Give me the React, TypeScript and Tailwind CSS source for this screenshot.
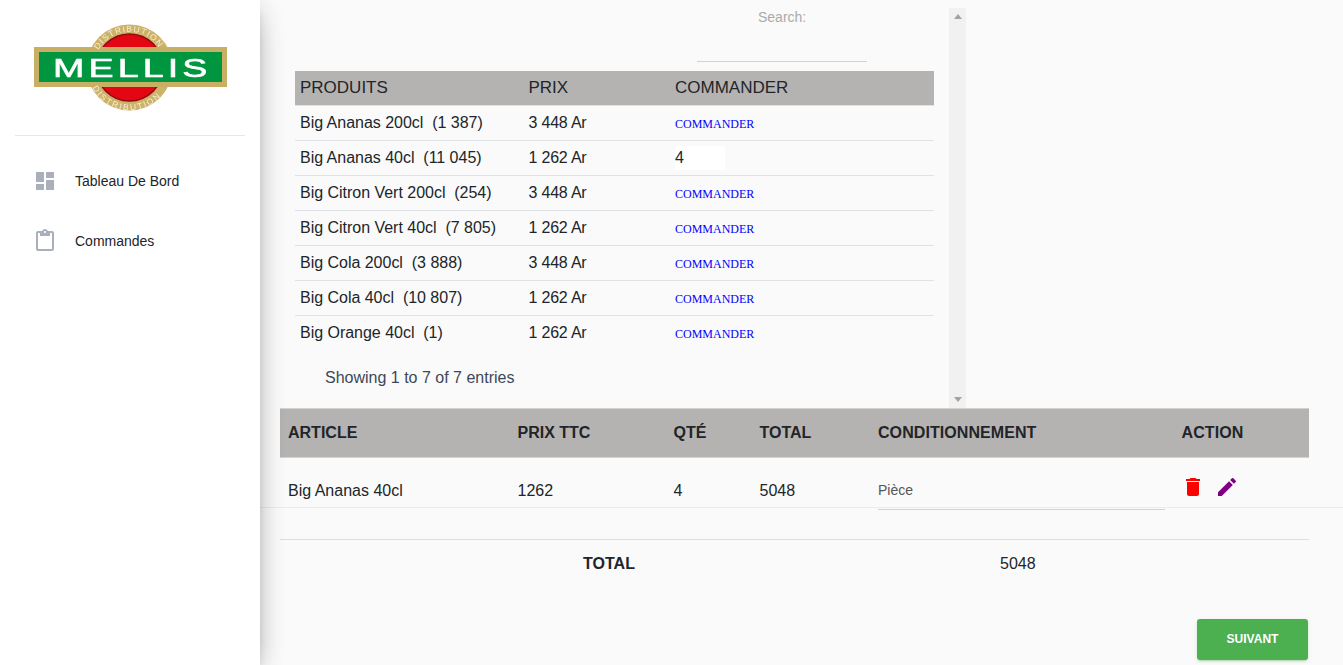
import { MdContentPaste, MdDashboard, MdDelete, MdEdit } from 'react-icons/md';

const PRODUCTS = [
  { name: 'Big Ananas 200cl', stock: '1 387', price: '3 448 Ar' },
  { name: 'Big Ananas 40cl', stock: '11 045', price: '1 262 Ar', qty: '4' },
  { name: 'Big Citron Vert 200cl', stock: '254', price: '3 448 Ar' },
  { name: 'Big Citron Vert 40cl', stock: '7 805', price: '1 262 Ar' },
  { name: 'Big Cola 200cl', stock: '3 888', price: '3 448 Ar' },
  { name: 'Big Cola 40cl', stock: '10 807', price: '1 262 Ar' },
  { name: 'Big Orange 40cl', stock: '1', price: '1 262 Ar' },
];

// Logo Mellis
function Logo() {
  return (
    <svg width="195" height="90" viewBox="0 0 195 90" className="blur-[0.4px]">
      <defs>
        <path id="arcTop" d="M 65.5 27 A 35.5 35.5 0 0 1 127.5 27" />
        <path id="arcBottom" d="M 58 62 A 42 42 0 0 0 135 62" />
      </defs>
      <circle cx="96.5" cy="44.5" r="43" fill="#cdb26a" />
      <circle cx="96.5" cy="44.5" r="33.5" fill="#e30613" />
      <circle cx="96.5" cy="44.5" r="33.5" fill="none" stroke="#8f0a10" strokeWidth="1.5" />
      <rect x="1" y="24" width="193" height="40" fill="#c9ae66" />
      <rect x="6" y="29" width="183" height="30" fill="#009640" />
      <text
        transform="translate(20 54) scale(1.42 1)"
        letterSpacing="2.9"
        fill="#fff"
        stroke="#fff"
        strokeWidth="0.6"
        fontSize="26.5"
        fontFamily="'Liberation Sans', sans-serif"
      >
        MELLIS
      </text>
      <text fill="#f5edd5" fontSize="8.5" fontFamily="'Liberation Sans', sans-serif">
        <textPath href="#arcTop" textLength="72">DISTRIBUTION</textPath>
      </text>
      <text fill="#f5edd5" fontSize="8.5" fontFamily="'Liberation Sans', sans-serif">
        <textPath href="#arcBottom" startOffset="3" textLength="80">DISTRIBUTION</textPath>
      </text>
    </svg>
  );
}

function Sidebar() {
  return (
    <aside className="relative z-10 w-[260px] h-full shrink-0 bg-white shadow-[0_10px_30px_-12px_rgba(0,0,0,0.42),0_4px_25px_0_rgba(0,0,0,0.12),0_8px_10px_-5px_rgba(0,0,0,0.2)]">
      <div className="mx-[15px] h-[136px] pt-[23px] pl-[18px] border-b border-[#e6e6e6]">
        <Logo />
      </div>
      <nav className="pt-[15px]">
        <div className="h-[60px] flex items-center pl-[33px] gap-[18px] text-sm text-[#212529]">
          <MdDashboard size={24} className="text-[#a9afbb]" />
          <span>Tableau De Bord</span>
        </div>
        <div className="h-[60px] flex items-center pl-[33px] gap-[18px] text-sm text-[#212529]">
          <MdContentPaste size={24} className="text-[#a9afbb]" />
          <span>Commandes</span>
        </div>
      </nav>
    </aside>
  );
}

function ProductsPanel() {
  return (
    <div className="ml-5 mt-2 w-[686px] h-[400px] flex">
      <div className="w-[669px] pl-[15px]">
        <div className="h-[63px] text-[14px] leading-[18px] text-[#aaaaaa]">
          <div className="pl-[463px]">Search:</div>
          <div className="ml-[402px] mt-[35px] w-[170px] border-b border-[#d2d2d2]" />
        </div>
        <div className="w-[639px]">
          <div className="flex items-center h-[35px] bg-[#b5b3b1] text-[17px] text-[#212529] border-b border-[#dee2e6]">
            <div className="w-[233.5px] pl-[5px]">PRODUITS</div>
            <div className="w-[146.5px]">PRIX</div>
            <div>COMMANDER</div>
          </div>
          {PRODUCTS.map((p, i) => (
            <div
              key={p.name}
              className={`flex items-center h-[35px] text-[#212529] border-b ${i < PRODUCTS.length - 1 ? 'border-[#dee2e6]' : 'border-transparent'}`}
            >
              <div className="w-[233.5px] pl-[5px] whitespace-pre tracking-[-0.02px]">{p.name}{'  '}({p.stock})</div>
              <div className="w-[146.5px] tracking-[-0.2px]">{p.price}</div>
              {p.qty ? (
                <div className="w-[50px] h-[24px] bg-white leading-[24px]">{p.qty}</div>
              ) : (
                <div className="pt-px text-xs text-[#0000ff] font-['Liberation_Serif',serif]">COMMANDER</div>
              )}
            </div>
          ))}
        </div>
        <div className="pl-[30px] pt-[15px] text-[#3c4858]">Showing 1 to 7 of 7 entries</div>
      </div>
      {/* barre de défilement */}
      <div className="w-[17px] h-full bg-[#f1f1f1] flex flex-col justify-between items-center py-[6px]">
        <div className="w-0 h-0 border-x-[4px] border-x-transparent border-b-[5px] border-b-[#a3a3a3]" />
        <div className="w-0 h-0 border-x-[4px] border-x-transparent border-t-[5px] border-t-[#a3a3a3]" />
      </div>
    </div>
  );
}

function CartTable() {
  return (
    <div>
      <div className="mx-5 w-[1029px] h-[50px] flex items-center bg-[#b5b3b1] font-bold text-[#212529] border-y border-[#d4d2d0]">
        <div className="w-[237.5px] pl-2">ARTICLE</div>
        <div className="w-[156px]">PRIX TTC</div>
        <div className="w-[86px]">QTÉ</div>
        <div className="w-[118.5px]">TOTAL</div>
        <div className="w-[303.5px] tracking-[0.07px]">CONDITIONNEMENT</div>
        <div className="tracking-[0.1px]">ACTION</div>
      </div>
      <div className="h-[50px] border-b border-[#ececec] pl-5">
        <div className="flex w-[1029px] h-[51px] text-[#212529]">
          <div className="w-[237.5px] pl-2 pt-[21px]">Big Ananas 40cl</div>
          <div className="w-[156px] pt-[21px]">1262</div>
          <div className="w-[86px] pt-[21px]">4</div>
          <div className="w-[118.5px] pt-[21px]">5048</div>
          <div className="w-[287px] h-[52px] pt-[22px] text-sm text-[#555555] border-b border-[#d2d2d2]">Pièce</div>
          <div className="flex pl-[16px] pt-[17px] gap-[10px] items-start">
            <MdDelete size={24} className="text-[#ff0000]" />
            <MdEdit size={24} className="text-[#800080]" />
          </div>
        </div>
      </div>
    </div>
  );
}

export default function App() {
  return (
    <div className="flex w-[1343px] h-[665px] overflow-hidden bg-[#fafafa] font-['Liberation_Sans',Arial,sans-serif]">
      <Sidebar />
      <main className="flex-1 min-w-0">
        <ProductsPanel />
        <CartTable />
        <div className="mx-5 w-[1029px] mt-[31px] border-t border-[#dddddd] h-[48px] flex items-center text-[#212529]">
          <div className="w-[355px] text-right font-bold tracking-[0.05px]">TOTAL</div>
          <div className="pl-[365px]">5048</div>
        </div>
        <div className="mx-5 w-[1029px] mt-[32px] flex justify-end">
          <button className="mr-px w-[111px] h-[41px] pb-px rounded-[3px] bg-[#4caf50] text-white text-xs font-bold uppercase shadow-[0_2px_2px_0_rgba(76,175,80,0.14),0_3px_1px_-2px_rgba(76,175,80,0.2),0_1px_5px_0_rgba(76,175,80,0.12)]">
            Suivant
          </button>
        </div>
      </main>
    </div>
  );
}
